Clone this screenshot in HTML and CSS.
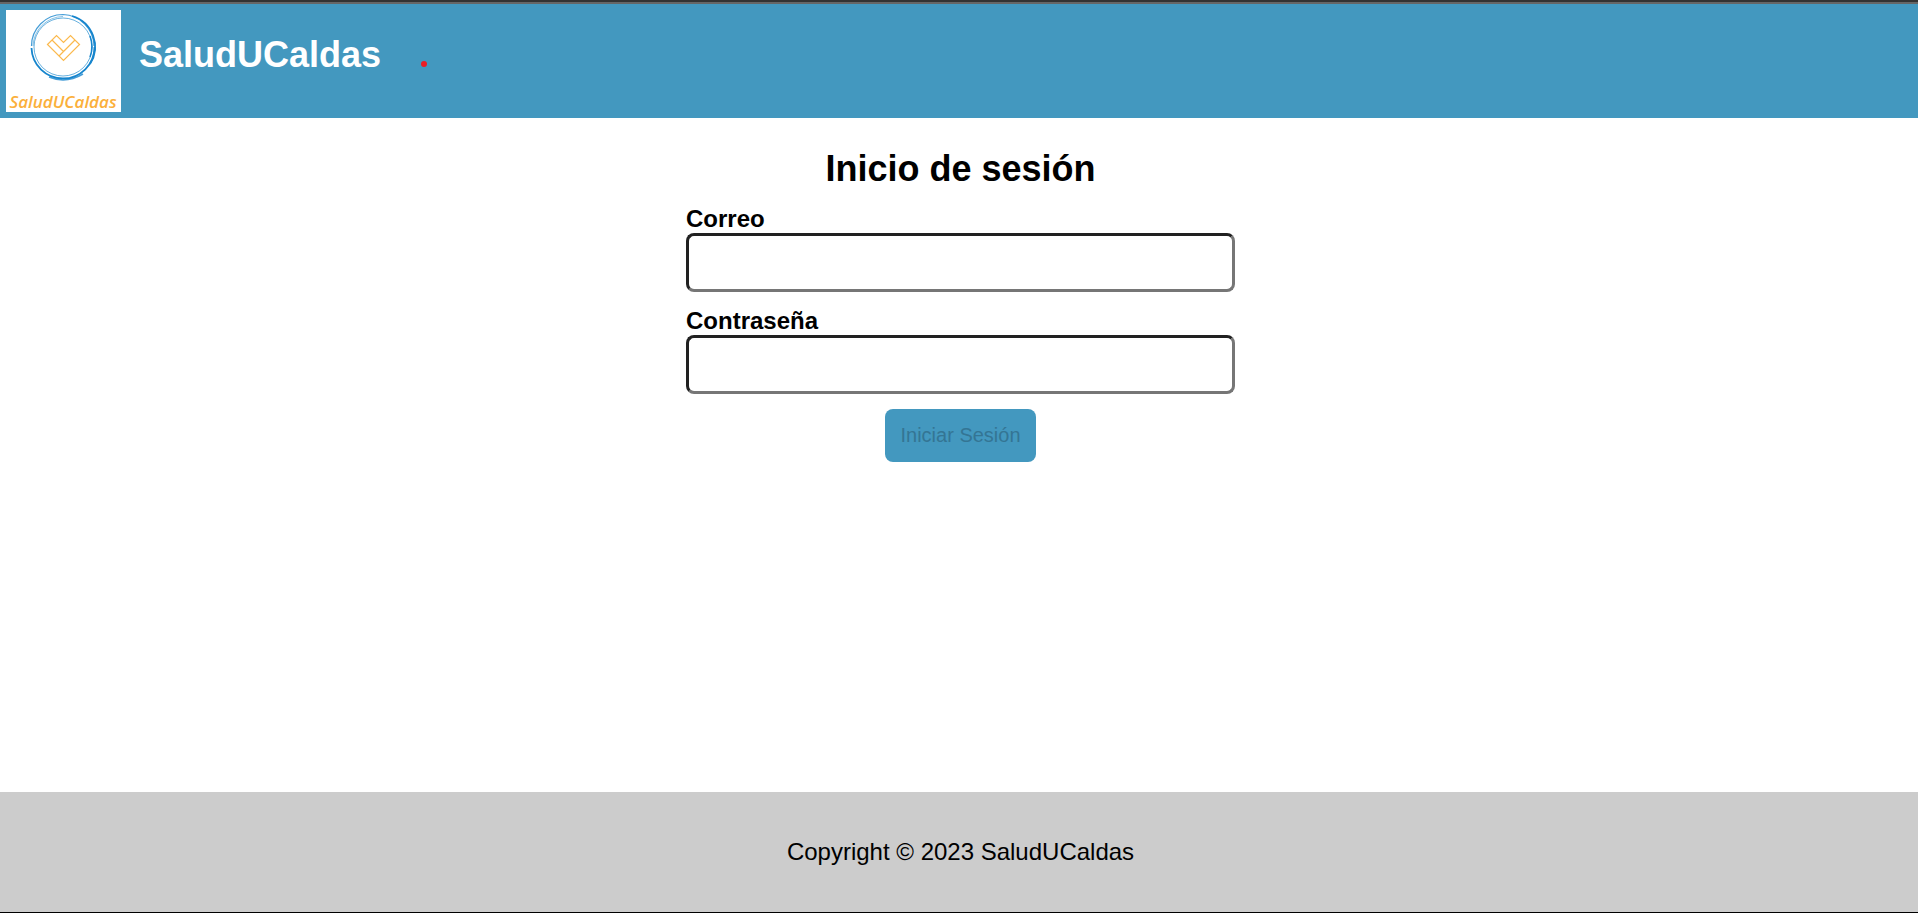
FILE: index.html
```html
<!DOCTYPE html>
<html lang="es">
<head>
<meta charset="utf-8">
<meta name="viewport" content="width=device-width, initial-scale=1">
<title>SaludUCaldas</title>
<link rel="stylesheet" href="styles.css">
</head>
<body>
<header class="header">
  <svg class="logo" viewBox="0 0 115 102" role="img" aria-label="Logo">
    <rect width="115" height="102" fill="#fff"/>
    <g fill="none" stroke="#1685cd">
      <path d="M25.500 36A31.500 31.500 0 0 1 57 4.500A32 32 0 0 1 88 36" stroke-width="1.200" opacity=".8"/>
      <circle cx="57" cy="37" r="29" stroke-width="1" opacity=".65"/>
      <path d="M27 36A30.500 30.500 0 0 1 57 6.500" stroke-width="1" opacity=".5"/>
      <path d="M25.500 38A31.500 31.500 0 0 0 57 68.500A31.500 31.500 0 0 0 88.500 37" stroke-width="1.800"/>
      <path d="M66 6A32 32 0 0 1 84 54" stroke-width="1.800"/>
      <path d="M84 26A30 30 0 0 1 84 47" stroke-width="1.500"/>
      <path d="M43 67Q60 74 77 64" stroke-width="1.500" opacity=".8"/>
    </g>
    <g fill="none" stroke="#fbb94d" stroke-width="1.200">
      <path d="M41.500 34.500L50.500 25.500L57.500 32.500L64.500 25.500L73.500 34.500L57.500 50.500Z"/>
      <path d="M46 30L57.500 41.500M69 30L53 46"/>
    </g>
    <text class="logo-text" x="57" y="98" text-anchor="middle">SaludUCaldas</text>
  </svg>
  <h1 class="brand">SaludUCaldas</h1>
  <span class="dot"></span>
</header>
<main class="main">
  <form class="form">
    <h2 class="title">Inicio de sesión</h2>
    <div class="field">
      <label for="correo">Correo</label>
      <input id="correo" type="email">
    </div>
    <div class="field">
      <label for="clave">Contraseña</label>
      <input id="clave" type="password">
    </div>
    <button class="submit" type="submit" disabled>Iniciar Sesión</button>
  </form>
</main>
<footer class="footer">Copyright © 2023 SaludUCaldas</footer>
</body>
</html>
```
FILE: styles.css
```css
* {
  box-sizing: border-box;
}

body {
  margin: 0;
  min-height: 100vh;
  display: flex;
  flex-direction: column;
  background: #fff;
  color: #000;
  font-family: Arial, "Liberation Sans", sans-serif;
  border-top: 2px solid #333;
  border-bottom: 1px solid #000;
}

.header {
  display: flex;
  align-items: flex-start;
  padding: 6px;
  background: #4398bf;
  border-top: 2px solid #666;
}

.logo {
  display: block;
  width: 115px;
  height: 102px;
}

.logo-text {
  font: italic 600 17px "Open Sans", sans-serif;
  fill: #fbb03b;
}

.brand {
  margin: 24px 40px 0 18px;
  color: #fff;
  font-size: 36px;
  line-height: 42px;
}

.dot {
  width: 6px;
  height: 6px;
  margin-top: 51px;
  border-radius: 50%;
  background: #ed1c24;
}

.main {
  flex: 1;
  display: flex;
  justify-content: center;
  align-items: flex-start;
  padding: 30px 0 30px 3px;
}

.form {
  display: flex;
  flex-direction: column;
  align-items: center;
  gap: 15px;
  width: 549px;
  max-width: 100%;
}

.title {
  margin: 0;
  font-size: 36px;
  line-height: 42px;
}

.field {
  display: flex;
  flex-direction: column;
  width: 100%;
}

.field label {
  font-size: 24px;
  font-weight: bold;
  line-height: 28px;
}

.field input {
  width: 100%;
  padding: 15px;
  border: 3px solid;
  border-color: #212121 #767676 #767676 #212121;
  border-radius: 8px;
  background: #fff;
  font: 20px/23px Arial, "Liberation Sans", sans-serif;
  height: 59px;
}

.submit {
  padding: 15px;
  border: 0;
  border-radius: 8px;
  background: #4398bf;
  color: #347594;
  font: 20px/23px Arial, "Liberation Sans", sans-serif;
}

.footer {
  padding: 46px 0 46px 3px;
  background: #ccc;
  font-size: 24px;
  line-height: 28px;
  text-align: center;
}
```
